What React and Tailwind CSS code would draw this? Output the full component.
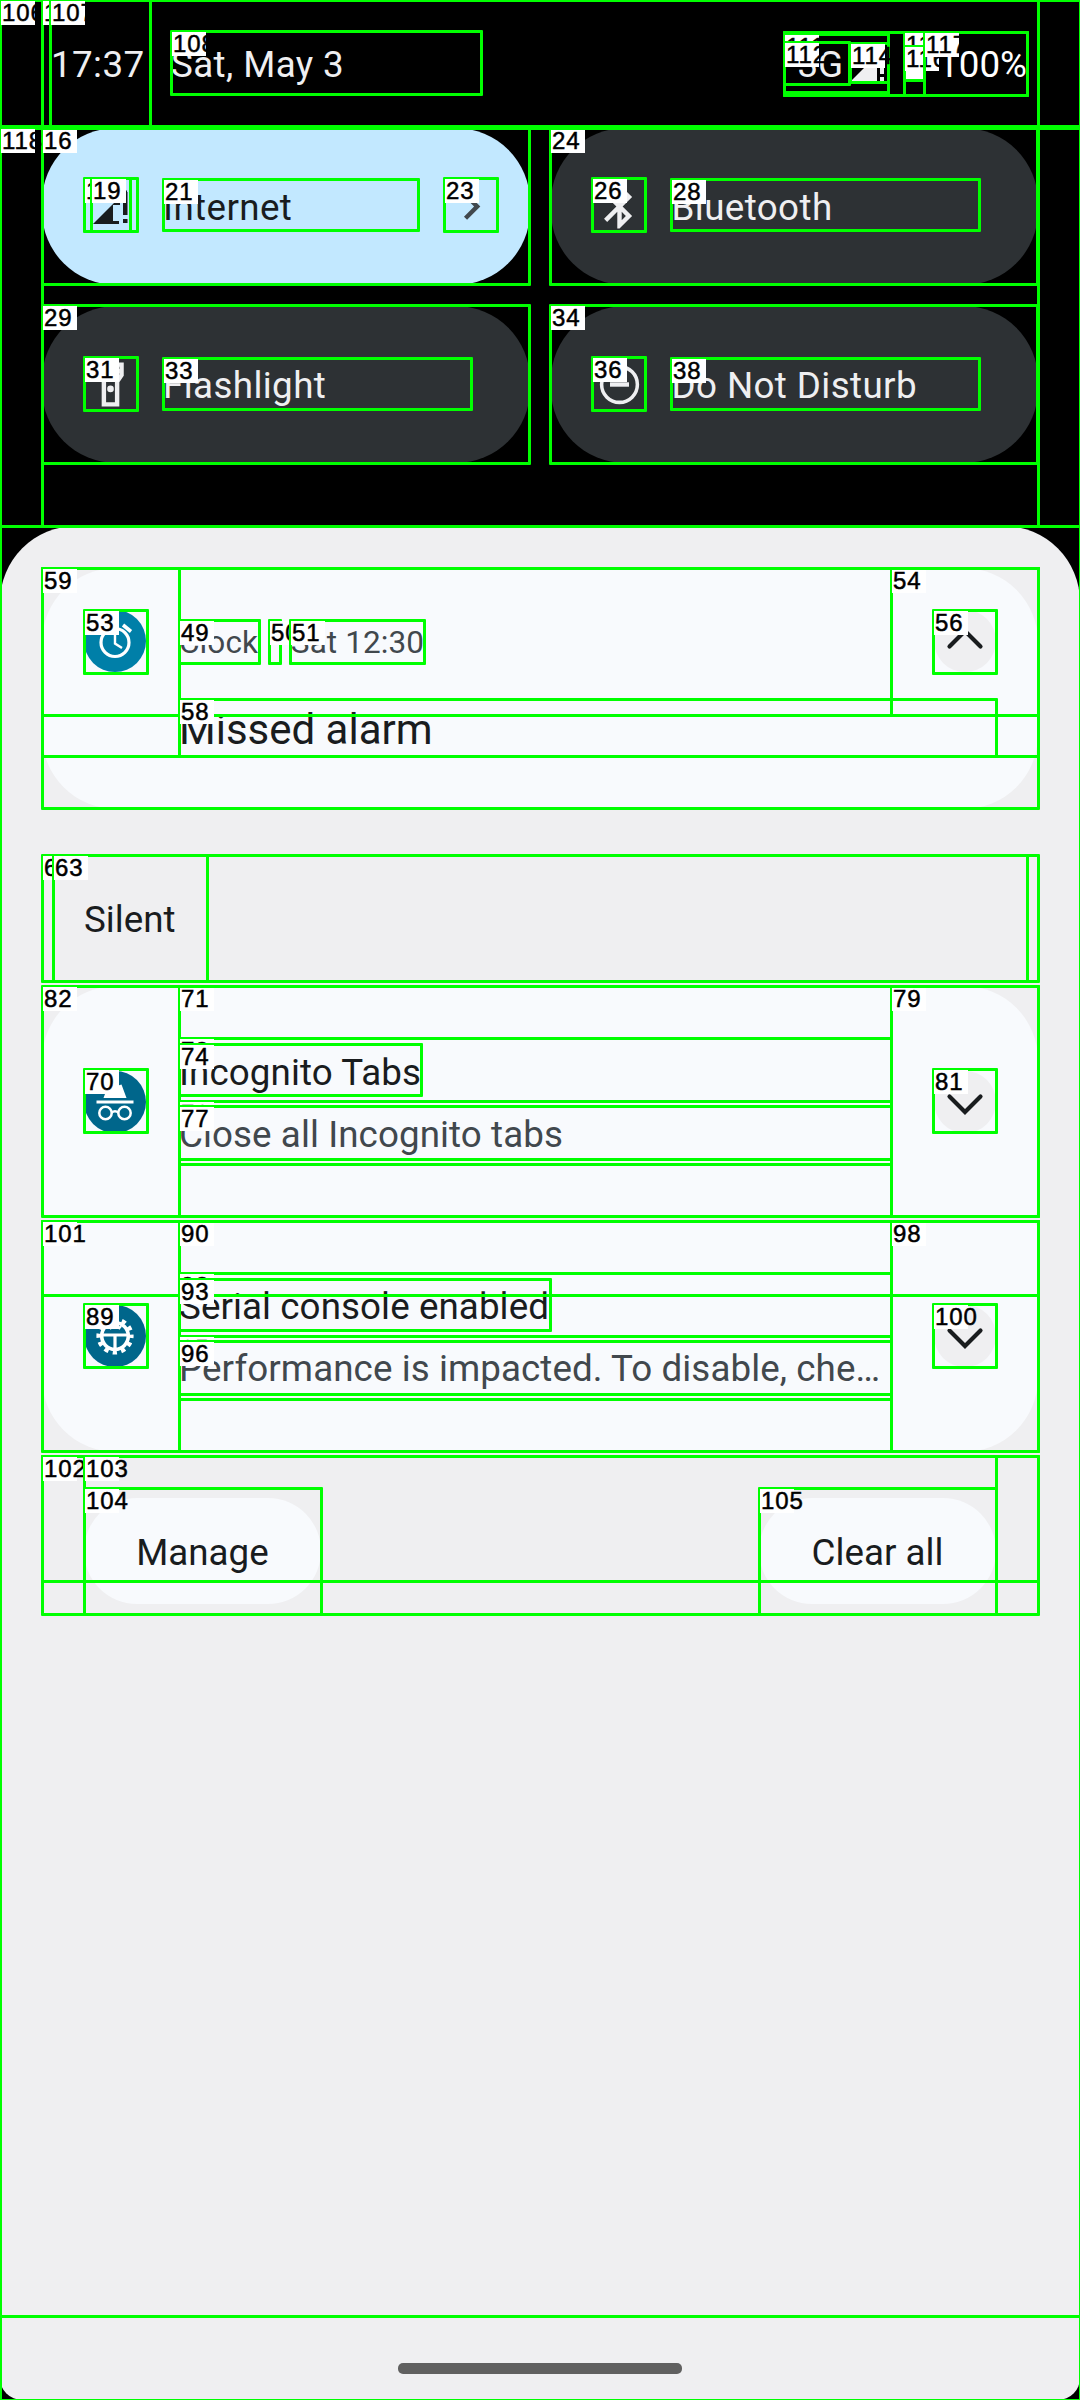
import React from "react";

// Inspector outlines in paint order: [left, top, right, bottom, label]
const bounds = [
  [0, 0, 1080, 2400, ""],
  [0, 526, 1080, 2316, ""],
  [42, 128, 1038, 526, ""],
  [42, 128, 529, 284, "16"],
  [84, 178, 137, 231, "17"],
  [91, 178, 130, 231, "19"],
  [163, 179, 418, 230, "21"],
  [444, 178, 497, 231, "23"],
  [550, 128, 1037, 284, "24"],
  [592, 178, 645, 231, "26"],
  [671, 179, 979, 230, "28"],
  [42, 305, 529, 463, "29"],
  [84, 357, 137, 410, "31"],
  [163, 358, 471, 409, "33"],
  [550, 305, 1037, 463, "34"],
  [592, 357, 645, 410, "36"],
  [671, 358, 979, 409, "38"],
  [42, 568, 1038, 715, ""],
  [42, 568, 1038, 756, ""],
  [179, 568, 891, 715, ""],
  [179, 620, 259, 663, "49"],
  [269, 620, 280, 663, "50"],
  [290, 620, 424, 663, "51"],
  [84, 610, 147, 673, "53"],
  [891, 568, 1038, 715, "54"],
  [933, 610, 996, 673, "56"],
  [179, 699, 996, 756, "58"],
  [42, 568, 1038, 808, "59"],
  [42, 855, 1038, 981, "62"],
  [53, 855, 1027, 981, ""],
  [53, 855, 207, 981, "63"],
  [84, 1069, 147, 1132, "70"],
  [179, 986, 891, 1216, "71"],
  [179, 1038, 891, 1101, "73"],
  [179, 1044, 421, 1095, "74"],
  [179, 1101, 891, 1164, "76"],
  [179, 1106, 891, 1159, "77"],
  [891, 986, 1038, 1216, "79"],
  [933, 1069, 996, 1132, "81"],
  [42, 986, 1038, 1216, "82"],
  [42, 1221, 1038, 1295, ""],
  [84, 1304, 147, 1367, "89"],
  [179, 1221, 891, 1451, "90"],
  [179, 1273, 891, 1336, "92"],
  [179, 1279, 550, 1330, "93"],
  [179, 1336, 891, 1399, "95"],
  [179, 1341, 891, 1394, "96"],
  [891, 1221, 1038, 1451, "98"],
  [933, 1304, 996, 1367, "100"],
  [42, 1221, 1038, 1451, "101"],
  [42, 1456, 1038, 1581, ""],
  [42, 1456, 1038, 1614, "102"],
  [84, 1456, 996, 1614, "103"],
  [84, 1488, 321, 1614, "104"],
  [759, 1488, 996, 1614, "105"],
  [0, 0, 1080, 126, "106"],
  [42, 0, 1038, 126, "119"],
  [50, 0, 150, 126, "107"],
  [171, 31, 481, 94, "108"],
  [784, 32, 1027, 95, ""],
  [784, 32, 888, 95, ""],
  [784, 34, 888, 92, "111"],
  [784, 42, 849, 84, "112"],
  [850, 43, 888, 82, "114"],
  [904, 32, 924, 95, "115"],
  [904, 46, 924, 80, "116"],
  [924, 32, 1027, 95, "117"],
  [0, 128, 1080, 2400, "118"],
];

function Bounds() {
  return (
    <div className="pointer-events-none absolute inset-0 overflow-hidden">
      {bounds.map(([l, t, r, b, label], i) => (
        <React.Fragment key={i}>
          <div
            className="absolute rounded-[1px] border-[3px] border-[#00ff00]"
            style={{ left: l - 1, top: t - 1, width: r - l + 3, height: b - t + 3 }}
          />
          {label && (
            <div
              className="absolute h-6 w-[34px] whitespace-nowrap bg-white pl-px font-['Liberation_Sans',sans-serif] text-[24px] leading-6 tracking-[0.9px] text-black [-webkit-text-stroke:0.5px_black]"
              style={{ left: l + 1, top: t + 1 }}
            >
              {label}
            </div>
          )}
        </React.Fragment>
      ))}
    </div>
  );
}

function SignalIcon() {
  return (
    <svg className="size-[35px]" viewBox="0 0 35 35" fill="currentColor">
      <path d="M0 35 34 1v2h-7v13h-7v16h6v3z" />
      <path d="M30 3h4.500v23H30zM30 30h4.500v4H30z" />
    </svg>
  );
}

function StatusSignalIcon() {
  return (
    <svg className="size-[34px]" viewBox="0 0 34 34" fill="currentColor">
      <path d="M0 33 26 7v26z" />
      <path d="M29 10h4v16h-4zM29 29h4v4h-4z" />
    </svg>
  );
}

function BluetoothIcon() {
  return (
    <svg className="size-[53px]" viewBox="0 0 24 24" fill="currentColor">
      <path d="M17.71 7.71 12 2h-1v7.590L6.410 5 5 6.410 10.590 12 5 17.590 6.410 19 11 14.410V22h1l5.710-5.710-4.300-4.290zM13 5.830l1.880 1.880L13 9.590zm1.880 10.460L13 18.170v-3.760z" />
    </svg>
  );
}

function FlashlightIcon() {
  return (
    <svg className="size-[53px]" viewBox="0 0 24 24" fill="currentColor" fillRule="evenodd">
      <path d="M18 2H6v6l2 3v11h8V11l2-3zM16 4v1H8V4zm-2 6.400V20h-4v-9.610l-2-3V7h8v.390z" />
      <circle cx="12" cy="14" r="1.500" />
    </svg>
  );
}

function DoNotDisturbIcon() {
  return (
    <svg className="size-[53px]" viewBox="0 0 24 24" fill="none" stroke="currentColor">
      <circle cx="12" cy="12" r="8.100" strokeWidth="1.600" />
      <path d="M7.700 12h8.600" strokeWidth="2" />
    </svg>
  );
}

function Tile({ icon, label, active, chevron }) {
  return (
    <div
      className={
        "flex h-[157px] items-center rounded-[74px] pl-[42px] pr-[32px] text-[36.75px] tracking-[0.4px] " +
        (active ? "bg-[#c2e8ff] text-[#191c1e]" : "bg-[#2d3134] text-[#efeff1]")
      }
    >
      <div className="flex size-[53px] shrink-0 items-center justify-center">{icon}</div>
      <span className="ml-[26px] flex-1 pt-[2px] leading-[52px]">{label}</span>
      {chevron && (
        <svg className="size-[53px] text-[#41484d]" viewBox="0 0 24 24" fill="currentColor">
          <path d="M10 6 8.590 7.410 13.170 12l-4.580 4.590L10 18l6-6z" />
        </svg>
      )}
    </div>
  );
}

function ClockBadge() {
  return (
    <svg className="size-[62px]" viewBox="0 0 62 62" fill="none" stroke="white">
      <circle cx="31" cy="31" r="31" fill="#007fa8" stroke="none" />
      <circle cx="31" cy="32.500" r="14" strokeWidth="3.200" />
      <path d="M31 24v9.500l7 4.500" strokeWidth="2.400" />
      <path d="m39 15 8 6.500" strokeWidth="3.600" />
      <path d="m23 15-8 6.500" strokeWidth="3.600" />
    </svg>
  );
}

function IncognitoBadge() {
  return (
    <svg className="size-[62px]" viewBox="0 0 62 62" fill="none" stroke="white">
      <circle cx="31" cy="31" r="31" fill="#00668b" stroke="none" />
      <path d="m19.500 27 5-13.500 6.500 2 6.500-2 5 13.500z" fill="white" stroke="none" />
      <path d="M12.500 31h37" strokeWidth="3" />
      <circle cx="21.500" cy="42" r="6.200" strokeWidth="2.500" />
      <circle cx="40.500" cy="42" r="6.200" strokeWidth="2.500" />
      <path d="M27.500 41.500q3.500-2.500 7 0" strokeWidth="2.500" />
    </svg>
  );
}

function GearBadge() {
  return (
    <svg className="size-[62px]" viewBox="0 0 62 62" fill="none" stroke="white">
      <circle cx="31" cy="31" r="31" fill="#00668b" stroke="none" />
      <circle cx="31" cy="31" r="13.300" strokeWidth="3.600" />
      <circle cx="31" cy="31" r="16.500" strokeWidth="4.200" strokeDasharray="4.300 4.340" strokeDashoffset="2.150" />
      <path d="M19 30h24M31 30v13" strokeWidth="3.200" />
      <path d="m25 21 2.500 3M37 21l-2.500 3" strokeWidth="2.400" />
    </svg>
  );
}

function Expander({ up }) {
  return (
    <div className="flex size-[62px] shrink-0 items-center justify-center rounded-full bg-[#efeff1] text-[#191c1e]">
      <svg
        className={up ? "size-[62px] rotate-180" : "size-[62px]"}
        viewBox="0 0 62 62"
        fill="none"
        stroke="currentColor"
        strokeWidth="4.200"
        strokeLinecap="round"
      >
        <path d="M15.500 25.500 31 41l15.500-15.500" />
      </svg>
    </div>
  );
}

function SilentNotification({ icon, title, text, corners }) {
  return (
    <div className={"flex h-[232px] items-center bg-[#f8fafd] px-[42px] " + corners}>
      {icon}
      <div className="ml-[33px] w-[712px] pt-[3px] text-[36.75px] leading-[62px] tracking-[0.08px]">
        <div className="text-[#191c1e]">{title}</div>
        <div className="truncate text-[#41484d]">{text}</div>
      </div>
      <div className="ml-auto">
        <Expander />
      </div>
    </div>
  );
}

export default function App() {
  return (
    <div className="relative flex h-[2400px] w-[1080px] flex-col overflow-hidden bg-black font-[Roboto,sans-serif]">
      <header className="flex h-[128px] items-center pl-[51px] pr-[53px] pt-[1px] text-[36.75px] text-[#efeff1]">
        <span className="w-[120px] tracking-[0.4px]">17:37</span>
        <span className="tracking-[0.4px]">Sat, May 3</span>
        <div className="ml-auto flex items-center">
          <span className="mr-[8px]">3G</span>
          <StatusSignalIcon />
          <svg className="ml-[18px] h-[34px] w-[20px]" viewBox="0 0 20 34" fill="white">
            <path d="M6 0h8v3h6v31H0V3h6z" />
          </svg>
          <span className="ml-[15px] text-white">100%</span>
        </div>
      </header>

      <section className="grid h-[398px] grid-cols-2 content-start gap-x-[21px] gap-y-[21px] px-[42px]">
        <Tile active chevron icon={<SignalIcon />} label="Internet" />
        <Tile icon={<BluetoothIcon />} label="Bluetooth" />
        <Tile icon={<FlashlightIcon />} label="Flashlight" />
        <Tile icon={<DoNotDisturbIcon />} label="Do Not Disturb" />
      </section>

      <main className="flex flex-1 flex-col rounded-b-[22px] rounded-t-[76px] bg-[#efeff1] px-[42px] pt-[42px]">
        <article className="h-[241px] rounded-[74px] bg-[#f8fafd] px-[42px] pt-[42px]">
          <div className="flex items-center">
            <ClockBadge />
            <div className="ml-[33px] flex pt-[3px] text-[31.5px] leading-[43px] tracking-[0.1px] text-[#41484d]">
              <span>Clock</span>
              <span className="mx-[11px]">•</span>
              <span>Sat 12:30</span>
            </div>
            <div className="ml-auto">
              <Expander up />
            </div>
          </div>
          <p className="ml-[95px] mt-[30px] text-[42px] leading-[56px] text-[#191c1e]">Missed alarm</p>
        </article>

        <h2 className="mt-[47px] flex h-[130px] items-center pb-[2px] pl-[42px] text-[36.75px] text-[#191c1e]">Silent</h2>

        <div className="flex flex-col gap-[2px]">
          <SilentNotification
            icon={<IncognitoBadge />}
            title="Incognito Tabs"
            text="Close all Incognito tabs"
            corners="rounded-b-[10px] rounded-t-[74px]"
          />
          <SilentNotification
            icon={<GearBadge />}
            title="Serial console enabled"
            text="Performance is impacted. To disable, che…"
            corners="rounded-b-[74px] rounded-t-[10px]"
          />
        </div>

        <div className="mt-[46px] flex justify-between px-[42px] text-[36.75px] text-[#191c1e]">
          <button className="h-[106px] w-[237px] rounded-[53px] bg-[#f8fafd] pt-[3px]">Manage</button>
          <button className="h-[106px] w-[237px] rounded-[53px] bg-[#f8fafd] pt-[3px]">Clear all</button>
        </div>

        <div className="mb-[26px] mt-auto h-[11px] w-[284px] self-center rounded-[5px] bg-[#606060]" />
      </main>

      <Bounds />
    </div>
  );
}
